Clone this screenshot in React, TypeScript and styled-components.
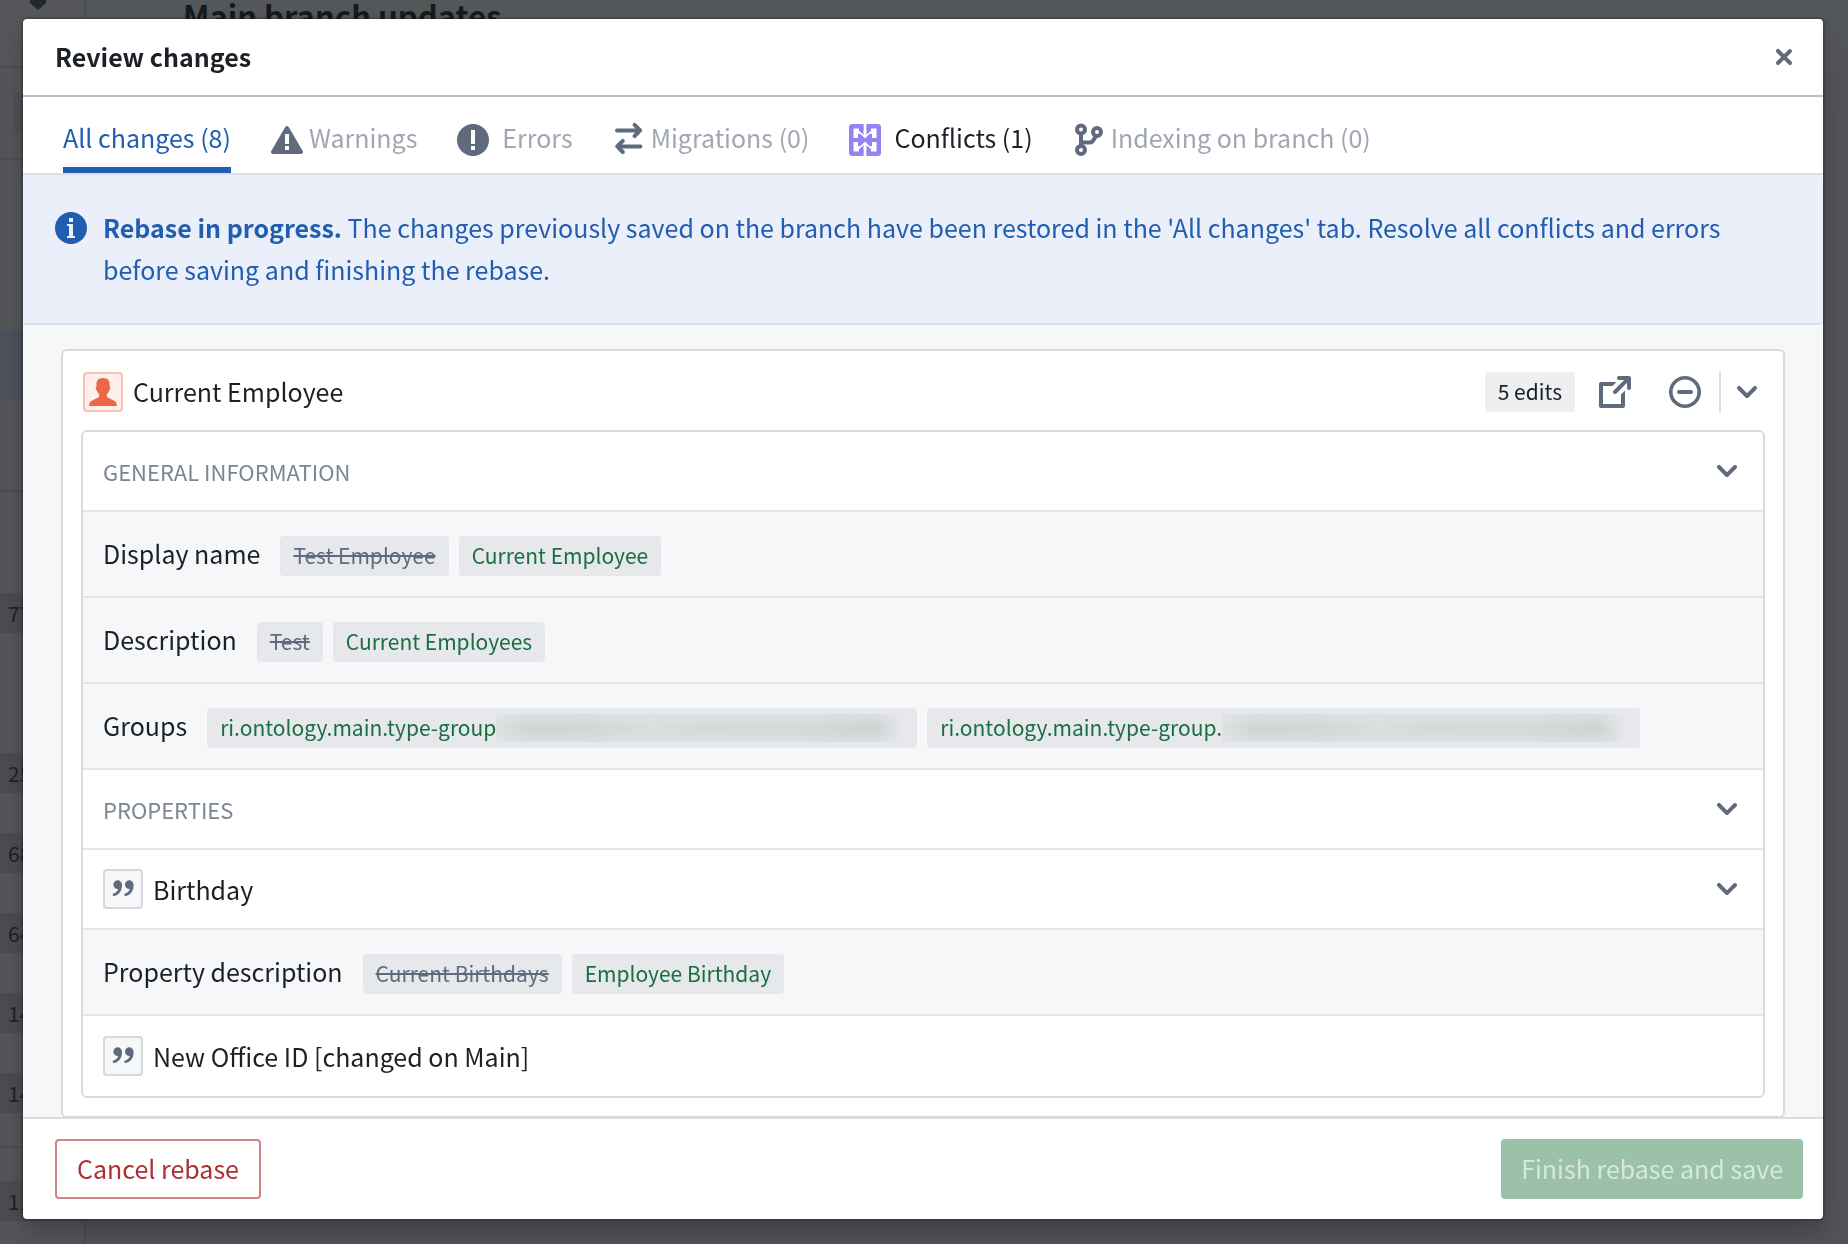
import React from "react";
import styled, { createGlobalStyle, css } from "styled-components";

const Global = createGlobalStyle`
  *, *::before, *::after { box-sizing: border-box; }
  html, body { margin: 0; }
  body {
    font-family: "Noto Sans CJK JP", "Noto Sans CJK SC", "Noto Sans", sans-serif;
    font-size: 25px;
    line-height: 36px;
    color: #1c2127;
    background: #535459;
    overflow: hidden;
  }
  button { font: inherit; color: inherit; background: none; border: 0; padding: 0; margin: 0; }
  h1, h2, h3, p { margin: 0; padding: 0; font-weight: 400; font-size: inherit; }
  svg { display: block; flex: none; overflow: visible; }
`;

const Page = styled.div`
  display: flex;
  height: 100vh;
  overflow: hidden;
`;

const PageSidebar = styled.aside`
  width: 86px;
  flex: none;
  border-right: 2px solid #4c4d51;
  background: #55565a;
  font-size: 21px;
  color: #1f2226;
`;

const SidebarCap = styled.div`
  height: 68px;
  padding-left: 24px;
  border-bottom: 2px solid #4c4d51;
  overflow: hidden;
`;

const SidebarBlock = styled.div<{ $h: number; $tone?: string; $line?: boolean }>`
  display: flex;
  align-items: center;
  height: ${(p) => p.$h}px;
  background: ${(p) => p.$tone ?? "transparent"};
  ${(p) => p.$line && css`border-bottom: 2px solid #4c4d51;`}
`;

const SidebarField = styled.div`
  flex: 1;
  height: 40px;
  margin: 0 14px;
  border-radius: 4px;
  background: #505155;
`;

const SidebarCount = styled.div`
  height: 40px;
  line-height: 40px;
  padding-left: 8px;
  background: #4c4d51;
`;

const PageMain = styled.main`
  flex: 1;
  padding-left: 97px;
  background: linear-gradient(#53575a 0, #535459 90px, #535459 100%);
`;

const PageTitle = styled.h1`
  && { font-size: 31px; font-weight: 700; }
  line-height: 30px;
  color: #171a1d;
`;

const Overlay = styled.div`
  position: fixed;
  inset: 0;
  display: flex;
  padding: 19px 25px 25px 23px;
`;

const Dialog = styled.section`
  flex: 1;
  min-width: 0;
  display: flex;
  flex-direction: column;
  background: #fff;
  border-radius: 4px;
  overflow: hidden;
  box-shadow: 0 0 0 2px rgba(17, 20, 24, 0.2), 0 8px 16px rgba(17, 20, 24, 0.2), 0 36px 48px rgba(17, 20, 24, 0.1);
`;

const DialogHeader = styled.header`
  display: flex;
  align-items: center;
  justify-content: space-between;
  height: 78px;
  flex: none;
  padding: 0 23px 0 32px;
  border-bottom: 2px solid #bcc0c5;
`;

const DialogTitle = styled.h2`
  && { font-weight: 700; padding-bottom: 2px; }
`;

const IconButton = styled.button`
  display: flex;
  color: #5f6b7c;
`;

const Tabs = styled.div`
  display: flex;
  gap: 40px;
  height: 78px;
  flex: none;
  padding-left: 40px;
  border-bottom: 2px solid #dcdee3;
`;

const Tab = styled.button<{ $state?: "selected" | "disabled" }>`
  display: flex;
  align-items: center;
  gap: 6px;
  padding-top: 10px;
  border-bottom: 6px solid ${(p) => (p.$state === "selected" ? "#215db0" : "transparent")};
  color: ${(p) => (p.$state === "selected" ? "#215db0" : p.$state === "disabled" ? "#a0a7b3" : "#1c2127")};
  white-space: nowrap;
`;

const TabIcon = styled.span<{ $wide?: boolean }>`
  display: flex;
  padding: 6px ${(p) => (p.$wide ? 7 : 0)}px 0 0;
  color: #5f6b7c;
`;

const Callout = styled.div`
  display: flex;
  gap: 16px;
  flex: none;
  padding: 31px 96px 33px 32px;
  min-height: 150px;
  background: #ebeffa;
  border-bottom: 2px solid #dcdfe6;
  border-radius: 4px;
  color: #215db0;
  line-height: 42px;
  svg { margin-top: 6px; }
`;

const Body = styled.div`
  flex: 1;
  min-height: 0;
  overflow: hidden;
  padding: 24px 38px 0;
  background: #f6f7f9;
`;

const Card = styled.article`
  border: 2px solid #d7d9dc;
  border-radius: 6px;
  background: #fff;
  padding: 0 18px 18px;
`;

const CardHeader = styled.header`
  display: flex;
  align-items: center;
  gap: 10px;
  height: 79px;
  padding: 3px 2px 0;
`;

const CardTitle = styled.h3`
  && { padding-bottom: 2px; }
`;

const CardActions = styled.div`
  display: flex;
  align-items: center;
  margin-left: auto;
`;

const EditCount = styled.span`
  height: 40px;
  line-height: 38px;
  padding: 0 13px;
  margin-right: 24px;
  border-radius: 4px;
  background: #eeeff1;
  font-size: 21px;
`;

const ActionSlot = styled.div<{ $gap: number }>`
  display: flex;
  margin-right: ${(p) => p.$gap}px;
`;

const Divider = styled.span`
  width: 2px;
  height: 40px;
  margin-right: 10px;
  background: #dcdee3;
`;

const TypeIcon = styled.span<{ $person?: boolean }>`
  display: flex;
  align-items: center;
  justify-content: center;
  width: 40px;
  height: 40px;
  flex: none;
  border-radius: 4px;
  border: 2px solid ${(p) => (p.$person ? "#f8c3b7" : "#d3d8de")};
  background: ${(p) => (p.$person ? "#fdf0ea" : "#f6f7f9")};
  color: ${(p) => (p.$person ? "#eb6847" : "#5f6b7c")};
`;

const Panel = styled.div`
  border: 2px solid #d9dadb;
  border-radius: 6px;
  overflow: hidden;
  & > * + * { border-top: 2px solid #e5e6e8; }
`;

const SectionRow = styled.div<{ $h?: number }>`
  display: flex;
  align-items: center;
  gap: 10px;
  height: ${(p) => p.$h ?? 80}px;
  padding: 0 20px;
  & > button { margin-left: auto; }
`;

const SectionTitle = styled.h3`
  && { font-size: 22px; }
  color: #7b8694;
`;

const ChangeRow = styled.div`
  display: flex;
  align-items: center;
  gap: 10px;
  height: 86px;
  padding: 0 20px;
  background: #f6f7f9;
`;

const ChangeLabel = styled.span`
  margin-right: 10px;
  padding-bottom: 2px;
  white-space: nowrap;
`;

const Tag = styled.span<{ $old?: boolean }>`
  display: flex;
  height: 40px;
  line-height: 38px;
  margin-top: 4px;
  padding: 0 13px;
  border-radius: 4px;
  background: #e7e8ec;
  font-size: 21px;
  white-space: nowrap;
  color: ${(p) => (p.$old ? "#5f6b7c" : "#1c6e42")};
  text-decoration: ${(p) => (p.$old ? "line-through" : "none")};
`;

const Redacted = styled.span<{ $w: number }>`
  width: ${(p) => p.$w}px;
  height: 28px;
  margin-top: 6px;
  border-radius: 0 8px 8px 0;
  background:
    linear-gradient(rgba(231, 232, 236, 0.5), rgba(231, 232, 236, 0) 45%, rgba(231, 232, 236, 0) 65%, rgba(231, 232, 236, 0.5)),
    linear-gradient(90deg, #dde1e1 0, #cfd7d5 8%, #d1d8d7 24%, #d9dede 38%, #d4dad9 52%, #d3dad9 76%, #ced5d4 93%, #e7e8ec 100%);
`;

const DialogFooter = styled.footer`
  display: flex;
  align-items: center;
  justify-content: space-between;
  height: 102px;
  flex: none;
  padding: 0 20px 0 32px;
  border-top: 2px solid #dadcde;
`;

const FooterButton = styled.button<{ $kind: "danger" | "success" }>`
  height: 60px;
  padding: 0 20px 2px;
  border-radius: 4px;
  ${(p) =>
    p.$kind === "danger"
      ? css`
          border: 2px solid #d38488;
          color: #ac2f33;
        `
      : css`
          background: #9bc2a9;
          color: #d7e7dd;
        `}
`;

const Chevron = () => (
  <svg width="32" height="32" viewBox="0 0 16 16" fill="currentColor">
    <path d="M12 5c-.28 0-.53.11-.71.29L8 8.59l-3.29-3.3a1.003 1.003 0 0 0-1.42 1.42l4 4c.18.18.43.29.71.29s.53-.11.71-.29l4-4A1.003 1.003 0 0 0 12 5z" />
  </svg>
);

const Cross = () => (
  <svg width="32" height="32" viewBox="0 0 16 16" fill="currentColor">
    <path d="M9.41 8l2.29-2.29c.19-.18.3-.43.3-.71a1.003 1.003 0 0 0-1.71-.71L8 6.59l-2.29-2.3a1.003 1.003 0 0 0-1.42 1.42L6.59 8 4.3 10.29c-.19.18-.3.43-.3.71a1.003 1.003 0 0 0 1.71.71L8 9.41l2.29 2.29c.18.19.43.3.71.3a1.003 1.003 0 0 0 .71-1.71L9.41 8z" />
  </svg>
);

const WarningSign = () => (
  <svg width="32" height="32" viewBox="0 0 16 16" fill="currentColor">
    <path fillRule="evenodd" d="M15.84 13.5l.01-.01-7-12-.01.01c-.17-.3-.48-.5-.85-.5s-.67.2-.85.5l-.01-.01-7 12 .01.01c-.09.15-.15.31-.15.5 0 .55.45 1 1 1h14c.55 0 1-.45 1-1 0-.19-.06-.35-.15-.5zm-6.85-.51h-2v-2h2v2zm0-3h-2v-5h2v5z" />
  </svg>
);

const ErrorSign = () => (
  <svg width="32" height="32" viewBox="0 0 16 16" fill="currentColor">
    <path fillRule="evenodd" d="M8 0a8 8 0 1 0 0 16A8 8 0 0 0 8 0zm1 13H7v-2h2v2zm0-3H7V3h2v7z" />
  </svg>
);

const Swap = () => (
  <svg width="32" height="32" viewBox="0 0 16 16" fill="none" stroke="currentColor" strokeWidth="2" strokeLinecap="round" strokeLinejoin="round">
    <path d="M2 3.200h11.500M10.800 .4l2.800 2.800-2.800 2.800M13.700 11.200H2.200M4.900 8.400l-2.800 2.800 2.800 2.800" />
  </svg>
);

const ConflictIcon = () => (
  <svg width="32" height="32" viewBox="0 0 32 32">
    <g fill="none" stroke="#9881f3" strokeWidth="4.500">
      <rect x="2.250" y="2.250" width="10" height="27.500" rx="1" />
      <rect x="19.750" y="2.250" width="10" height="27.500" rx="1" />
    </g>
    <path fill="#fff" d="M9 6l7 6 7-6v20l-7-6-7 6z" />
    <path fill="#9881f3" d="M3 14h6v-4h2.500l4.500 4.500L20.500 10H23v4h6v4h-6v4h-2.500L16 17.500 11.500 22H9v-4H3z" />
    <path fill="#9881f3" d="M11 0h3.500v6.500L11 4zM17.500 0H21v4l-3.500 2.500zM11 28l3.500-2.500V32H11zM17.500 25.500L21 28v4h-3.500z" />
  </svg>
);

const Branch = () => (
  <svg width="32" height="32" viewBox="0 0 16 16" fill="none" stroke="currentColor" strokeWidth="2">
    <circle cx="4" cy="2.800" r="2" />
    <circle cx="12" cy="4" r="2" />
    <circle cx="4" cy="13" r="2" />
    <path d="M4 5v6M4.500 9.300h3.500q1.500 0 2.200-1.200L11.500 6" />
  </svg>
);

const InfoSign = () => (
  <svg width="32" height="32" viewBox="0 0 16 16" fill="currentColor">
    <path fillRule="evenodd" d="M8 0a8 8 0 1 0 0 16A8 8 0 0 0 8 0zM7 3h2v2H7V3zm3 10H6v-1h1V7H6V6h3v6h1v1z" />
  </svg>
);

const Share = () => (
  <svg width="32" height="32" viewBox="0 0 16 16" fill="currentColor">
    <path d="M10.99 13.99h-9v-9h4.760l2-2H.99c-.55 0-1 .45-1 1v11c0 .55.45 1 1 1h11c.55 0 1-.45 1-1V7.240l-2 2v4.750zm4-14h-5c-.55 0-1 .45-1 1s.45 1 1 1h2.590L7.290 7.290a1 1 0 0 0-.3.710 1.003 1.003 0 0 0 1.710.710l5.300-5.300V6c0 .55.45 1 1 1s1-.45 1-1V1c0-.56-.45-1.010-1.010-1.010z" />
  </svg>
);

const Disable = () => (
  <svg width="32" height="32" viewBox="0 0 16 16" fill="none" stroke="currentColor">
    <circle cx="8" cy="8" r="7.100" strokeWidth="1.800" />
    <path d="M5 8h6" strokeWidth="2" strokeLinecap="round" />
  </svg>
);

const Person = () => (
  <svg width="32" height="32" viewBox="0 0 16 16" fill="currentColor">
    <path d="M8 1c2.400 0 3.300 1.400 3.300 3.200 0 .5-.1.8-.1 1.100.6.200.6 1.200 0 1.700-.2.900-.7 1.600-1.300 2.100v1.200c.5 1.200 3.900 1.400 4.700 3.100.2.500.400 1 .400 1.600H1c0-.6.200-1.100.4-1.600.8-1.700 4.200-1.900 4.700-3.100V9.100c-.6-.5-1.100-1.200-1.300-2.100-.6-.5-.6-1.500 0-1.700 0-.3-.1-.6-.1-1.100C4.700 2.400 5.600 1 8 1z" />
  </svg>
);

const Quote = () => (
  <svg width="32" height="32" viewBox="0 0 16 16" fill="currentColor">
    <path d="M5.200 3.600a2.200 2.200 0 1 0 .4 4.400C5.200 9.300 4.300 10 3.200 10.300c-.5.100-.5 1.200.1 1.200 2.400-.2 4.200-2.400 4.200-5.400 0-1.500-1-2.500-2.300-2.500zM11 3.600a2.200 2.200 0 1 0 .4 4.400c-.4 1.300-1.300 2-2.400 2.300-.5.100-.5 1.200.1 1.200 2.400-.2 4.200-2.400 4.200-5.400 0-1.500-1-2.500-2.300-2.500z" />
  </svg>
);

const CollapseButton = ({ label }: { label: string }) => (
  <IconButton type="button" aria-label={label}>
    <Chevron />
  </IconButton>
);

export default function App() {
  return (
    <>
      <Global />
      <Page>
        <PageSidebar>
          <SidebarCap>
            <svg width="28" height="10" viewBox="0 0 28 10" fill="#23282f">
              <path d="M6 0h16v3l-8 7-8-7z" />
            </svg>
          </SidebarCap>
          <SidebarBlock $h={92} $line>
            <SidebarField />
          </SidebarBlock>
          <SidebarBlock $h={170} />
          <SidebarBlock $h={70} $tone="#4e525c" />
          <SidebarBlock $h={92} $line />
          <SidebarBlock $h={101} />
          <SidebarCount>77</SidebarCount>
          <SidebarBlock $h={120} />
          <SidebarCount>25</SidebarCount>
          <SidebarBlock $h={40} />
          <SidebarCount>68</SidebarCount>
          <SidebarBlock $h={40} />
          <SidebarCount>64</SidebarCount>
          <SidebarBlock $h={40} />
          <SidebarCount>14</SidebarCount>
          <SidebarBlock $h={40} />
          <SidebarCount>14</SidebarCount>
          <SidebarBlock $h={35} $line />
          <SidebarBlock $h={33} />
          <SidebarCount>11</SidebarCount>
        </PageSidebar>
        <PageMain>
          <PageTitle>Main branch updates</PageTitle>
        </PageMain>
      </Page>
      <Overlay>
        <Dialog role="dialog" aria-labelledby="dialog-title">
          <DialogHeader>
            <DialogTitle id="dialog-title">Review changes</DialogTitle>
            <IconButton type="button" aria-label="Close">
              <Cross />
            </IconButton>
          </DialogHeader>
          <Tabs role="tablist">
            <Tab type="button" role="tab" aria-selected $state="selected">All changes (8)</Tab>
            <Tab type="button" role="tab" $state="disabled"><TabIcon><WarningSign /></TabIcon>Warnings</Tab>
            <Tab type="button" role="tab" $state="disabled"><TabIcon $wide><ErrorSign /></TabIcon>Errors</Tab>
            <Tab type="button" role="tab" $state="disabled"><TabIcon><Swap /></TabIcon>Migrations (0)</Tab>
            <Tab type="button" role="tab"><TabIcon $wide><ConflictIcon /></TabIcon>Conflicts (1)</Tab>
            <Tab type="button" role="tab" $state="disabled"><TabIcon><Branch /></TabIcon>Indexing on branch (0)</Tab>
          </Tabs>
          <Callout>
            <InfoSign />
            <p>
              <strong>Rebase in progress.</strong> The changes previously saved on the branch have been restored in the
              'All changes' tab. Resolve all conflicts and errors before saving and finishing the rebase.
            </p>
          </Callout>
          <Body>
            <Card>
              <CardHeader>
                <TypeIcon $person><Person /></TypeIcon>
                <CardTitle>Current Employee</CardTitle>
                <CardActions>
                  <EditCount>5 edits</EditCount>
                  <ActionSlot $gap={38}>
                    <IconButton type="button" aria-label="Open"><Share /></IconButton>
                  </ActionSlot>
                  <ActionSlot $gap={18}>
                    <IconButton type="button" aria-label="Discard"><Disable /></IconButton>
                  </ActionSlot>
                  <Divider />
                  <CollapseButton label="Collapse Current Employee" />
                </CardActions>
              </CardHeader>
              <Panel>
                <SectionRow $h={78}>
                  <SectionTitle>GENERAL INFORMATION</SectionTitle>
                  <CollapseButton label="Collapse general information" />
                </SectionRow>
                <ChangeRow>
                  <ChangeLabel>Display name</ChangeLabel>
                  <Tag $old>Test Employee</Tag>
                  <Tag>Current Employee</Tag>
                </ChangeRow>
                <ChangeRow>
                  <ChangeLabel>Description</ChangeLabel>
                  <Tag $old>Test</Tag>
                  <Tag>Current Employees</Tag>
                </ChangeRow>
                <ChangeRow>
                  <ChangeLabel>Groups</ChangeLabel>
                  <Tag>ri.ontology.main.type-group<Redacted $w={408} /></Tag>
                  <Tag>ri.ontology.main.type-group.<Redacted $w={405} /></Tag>
                </ChangeRow>
                <SectionRow>
                  <SectionTitle>PROPERTIES</SectionTitle>
                  <CollapseButton label="Collapse properties" />
                </SectionRow>
                <SectionRow>
                  <TypeIcon><Quote /></TypeIcon>
                  <span>Birthday</span>
                  <CollapseButton label="Collapse Birthday" />
                </SectionRow>
                <ChangeRow>
                  <ChangeLabel>Property description</ChangeLabel>
                  <Tag $old>Current Birthdays</Tag>
                  <Tag>Employee Birthday</Tag>
                </ChangeRow>
                <SectionRow $h={82}>
                  <TypeIcon><Quote /></TypeIcon>
                  <span>New Office ID [changed on Main]</span>
                </SectionRow>
              </Panel>
            </Card>
          </Body>
          <DialogFooter>
            <FooterButton type="button" $kind="danger">Cancel rebase</FooterButton>
            <FooterButton type="button" $kind="success" disabled>Finish rebase and save</FooterButton>
          </DialogFooter>
        </Dialog>
      </Overlay>
    </>
  );
}
